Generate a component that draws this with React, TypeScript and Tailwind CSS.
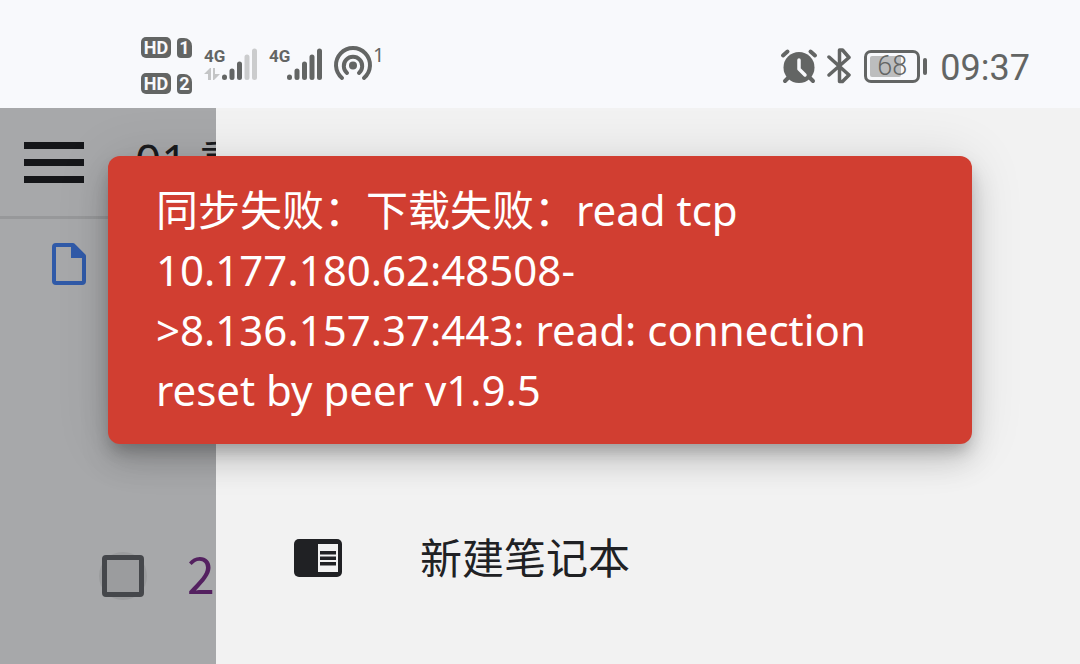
import React from 'react';

function HdBadge({ slot }: { slot: string }) {
  return (
    <div className="flex items-center gap-[6px] font-['Roboto',sans-serif] text-[18px] leading-none font-bold text-[#f8f9fc]">
      <span className="flex h-[21px] w-[30px] items-center justify-center rounded-[5px] bg-[#636564]">HD</span>
      <span className="flex h-[20px] w-[15px] items-center justify-center rounded-[4px] rounded-tr-[8px] bg-[#636564]">{slot}</span>
    </div>
  );
}

function Signal({ weak = false }: { weak?: boolean }) {
  const faint = weak ? '#cbcccd' : '#636564';
  return (
    <div className="relative h-[38px] w-[55px]">
      <span className="absolute top-0 left-0 font-['Roboto',sans-serif] text-[17px] leading-[20px] font-bold text-[#636564]">4G</span>
      <svg className="absolute inset-0" width="55" height="38" viewBox="0 0 55 38" fill="none" strokeLinecap="round" strokeWidth="5">
        {weak && <path d="M0 28l6-6h1v12H4v-6zM9 22h2v6h5l-6 6H9z" fill="#c4c5c6" />}
        <path d="M20.500 31v.5M28 25v6.500M35.500 18v13.500" stroke="#636564" />
        <path d="M43 11v20.500M50.500 5v26.500" stroke={faint} />
      </svg>
    </div>
  );
}

function StatusBar() {
  return (
    <header className="flex h-[108px] items-start justify-between bg-[#f8f9fc] pt-[37px] pr-[50px] pl-[141px] font-['Roboto',sans-serif] text-[#636564]">
      <div className="flex">
        <div className="flex w-[63px] flex-col gap-[15px]">
          <HdBadge slot="1" />
          <HdBadge slot="2" />
        </div>
        <div className="flex gap-[10px] pt-[9px]">
          <Signal weak />
          <Signal />
        </div>
        <svg className="mt-2 ml-[9px]" width="40" height="38" viewBox="0 0 40 38" fill="none" stroke="#636564" strokeWidth="4" strokeLinecap="round">
          <circle cx="20" cy="20.500" r="4" fill="#636564" stroke="none" />
          <path d="M14 28a9.200 9.200 0 1 1 12 0M9 33a17 17 0 1 1 22 0" />
        </svg>
        <span className="mt-[6px] font-['Noto_Sans',sans-serif] text-[20px] leading-[24px]">1</span>
      </div>
      <div className="flex h-[58px] items-center">
        <svg width="38" height="36" viewBox="0 0 38 36" fill="none" strokeLinecap="round" strokeLinejoin="round">
          <circle cx="19" cy="19.500" r="15.500" fill="#636564" />
          <path d="M3 7.500l4.500-4M35 7.500l-4.500-4M8 30l-3 3M30 30l3 3" stroke="#636564" strokeWidth="4" />
          <path d="M19 12v9l6 6" stroke="#f8f9fc" strokeWidth="3.500" />
        </svg>
        <svg className="ml-[9px]" width="24" height="38" viewBox="0 0 24 38" fill="none" stroke="#636564" strokeWidth="3.500" strokeLinejoin="round" strokeLinecap="round">
          <path d="M2 10l20 18-6.500 6.500h-3V3h3l6.500 7.500L2 28" />
        </svg>
        <div className="relative ml-[13px] flex h-[33px] w-[56px] items-center justify-center rounded-[7px] border-[3px] border-[#636564]">
          <span className="absolute inset-y-[3px] left-[3px] w-[31px] rounded-[2px] bg-[#bcbdbe]" />
          <span className="relative text-[27px] leading-none font-light">68</span>
        </div>
        <span className="ml-[3px] h-[17px] w-[4px] rounded-full bg-[#636564]" />
        <span className="ml-[13px] pt-1 text-[36px] leading-[48px]">09:37</span>
      </div>
    </header>
  );
}

function DimmedPage() {
  return (
    <section className="w-1/5 shrink-0 overflow-hidden bg-[#a7a8aa]">
      <div className="flex h-[111px] items-center border-b-[3px] border-[#97989a] pl-6">
        <button aria-label="Menu" className="flex w-[60px] shrink-0 flex-col gap-[10px]">
          <span className="h-[7px] bg-[#151619]" />
          <span className="h-[7px] bg-[#151619]" />
          <span className="h-[7px] bg-[#151619]" />
        </button>
        <h1 className="ml-[51px] pb-1 text-[46px] leading-[60px] whitespace-nowrap text-[#1a1b1e]">01 重</h1>
      </div>
      <svg className="mt-6 ml-[52px]" width="34" height="42" viewBox="0 0 34 42">
        <path d="M4 2h17l11 11v25a2 2 0 0 1-2 2H4a2 2 0 0 1-2-2V4a2 2 0 0 1 2-2z" fill="none" stroke="#305aa8" strokeWidth="4" strokeLinejoin="round" />
        <path d="M19 1h3l11 11v3H19z" fill="#305aa8" />
      </svg>
      <div className="mt-[256px] flex h-[70px] items-center pl-[99px]">
        <label className="flex shrink-0 items-center gap-10">
          <span className="flex size-12 items-center justify-center rounded-full bg-[#9b9c9e]">
            <input type="checkbox" className="size-[42px] appearance-none rounded-[4px] border-[5px] border-[#45474b]" />
          </span>
          <span className="pb-2 font-['Noto_Sans_CJK_SC',sans-serif] text-[50px] leading-[60px] text-[#542160]">20</span>
        </label>
      </div>
    </section>
  );
}

function NotebookIcon() {
  return (
    <svg width="48" height="38" viewBox="0 0 48 38">
      <rect width="48" height="38" rx="5" fill="#202124" />
      <path d="M24 5h20v28H24z" fill="#f2f2f2" />
      <path d="M26 12h16v3.500H26zM26 17.500h16V21H26zM26 23h16v3.500H26z" fill="#202124" />
    </svg>
  );
}

export default function App() {
  return (
    <div className="relative flex min-h-screen flex-col overflow-hidden bg-[#f2f2f2] font-['Noto_Sans','Noto_Sans_CJK_SC',sans-serif]">
      <StatusBar />
      <main className="flex flex-1">
        <DimmedPage />
        <nav className="flex-1 pt-[410px] pl-[78px]">
          <button className="flex h-20 items-center gap-[78px] text-[42px] leading-[60px] text-[#202124]">
            <NotebookIcon />
            新建笔记本
          </button>
        </nav>
      </main>
      <div role="alert" className="absolute inset-x-[10%] top-[156px] rounded-[12px] bg-[#d13e31] px-12 py-6 text-[42px] leading-[60px] text-white shadow-[0_9px_15px_-3px_rgba(0,0,0,0.2),0_18px_30px_0_rgba(0,0,0,0.14),0_3px_54px_0_rgba(0,0,0,0.12)]">
        同步失败：下载失败：read tcp 10.177.180.62:48508-<wbr />&gt;8.136.157.37:443: read: connection reset by peer v1.9.5
      </div>
    </div>
  );
}
